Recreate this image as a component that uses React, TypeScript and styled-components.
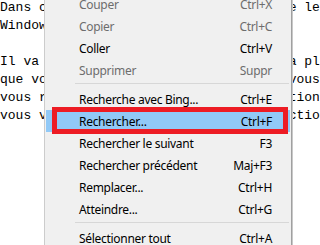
import React from "react";
import styled, { createGlobalStyle } from "styled-components";

const Global = createGlobalStyle`
  html, body { margin: 0; padding: 0; background: #ffffff; }
  body { width: 320px; height: 245px; overflow: hidden; position: relative; }
`;

const Page = styled.div`
  position: relative;
  width: 320px;
  height: 245px;
  overflow: hidden;
  background: #ffffff;
`;

const Editor = styled.pre`
  margin: -1px 0 0 0;
  padding: 0;
  font-family: "Liberation Mono", "DejaVu Sans Mono", monospace;
  font-size: 13px;
  line-height: 18px;
  color: #000000;
  white-space: pre;
  overflow: hidden;
`;

const Menu = styled.div`
  position: absolute;
  left: 44px;
  top: -39px;
  width: 246px;
  padding: 2px 0;
  background: #f0f0f0;
  border: 1px solid #cccccc;
  border-right-color: #a0a0a0;
  box-shadow: 1px 0 0 #c8c8c8;
  display: flex;
  flex-direction: column;
  font-family: "Noto Sans", "Open Sans", sans-serif;
  font-size: 12px;
  letter-spacing: -0.3px;
`;

const Row = styled.div<{ $disabled?: boolean; $active?: boolean }>`
  position: relative;
  height: 22px;
  margin: 0 1px;
  display: grid;
  grid-template-columns: 1fr auto;
  align-items: center;
  padding: 0 18px 0 33px;
  color: ${(p) => (p.$disabled ? "#6d6d6d" : "#000000")};
  background: ${(p) => (p.$active ? "#91c9f7" : "transparent")};
`;

const Label = styled.span`
  white-space: nowrap;
`;

const Shortcut = styled.span`
  white-space: nowrap;
  text-align: right;
`;

const Separator = styled.div`
  height: 1px;
  margin: 2px 2px 4px 30px;
  background: #d7d7d7;
`;

const Highlight = styled.span`
  position: absolute;
  left: 6px;
  right: 2px;
  top: -3px;
  bottom: -2px;
  border: 5px solid #ed1c24;
  pointer-events: none;
`;

type Item =
  | { sep: true }
  | { sep?: false; label: string; key: string; disabled?: boolean; active?: boolean };

const items: Item[] = [
  { label: "Annuler", key: "Ctrl+Z", disabled: true },
  { sep: true },
  { label: "Couper", key: "Ctrl+X", disabled: true },
  { label: "Copier", key: "Ctrl+C", disabled: true },
  { label: "Coller", key: "Ctrl+V" },
  { label: "Supprimer", key: "Suppr", disabled: true },
  { sep: true },
  { label: "Recherche avec Bing...", key: "Ctrl+E" },
  { label: "Rechercher...", key: "Ctrl+F", active: true },
  { label: "Rechercher le suivant", key: "F3" },
  { label: "Rechercher précédent", key: "Maj+F3" },
  { label: "Remplacer...", key: "Ctrl+H" },
  { label: "Atteindre...", key: "Ctrl+G" },
  { sep: true },
  { label: "Sélectionner tout", key: "Ctrl+A" },
  { label: "Heure/Date", key: "F5" },
];

const text = [
  "Dans ce tutoriel, nous allons voir que le Bloc-notes de",
  "Windows dispose d'une recherche.",
  "",
  "Il va de soi que le Bloc-notes ne sera plus",
  "que vous aurez besoin d'un outil car vous",
  "vous retrouverez aisément votre sélection",
  "vous verrez ensuite apparaître la fonction",
].join("\n");

export default function App() {
  return (
    <Page>
      <Global />
      <Editor>{text}</Editor>
      <Menu>
        {items.map((it, i) =>
          it.sep ? (
            <Separator key={i} />
          ) : (
            <Row key={i} $disabled={it.disabled} $active={it.active}>
              <Label>{it.label}</Label>
              <Shortcut>{it.key}</Shortcut>
              {it.active && <Highlight />}
            </Row>
          )
        )}
      </Menu>
    </Page>
  );
}
